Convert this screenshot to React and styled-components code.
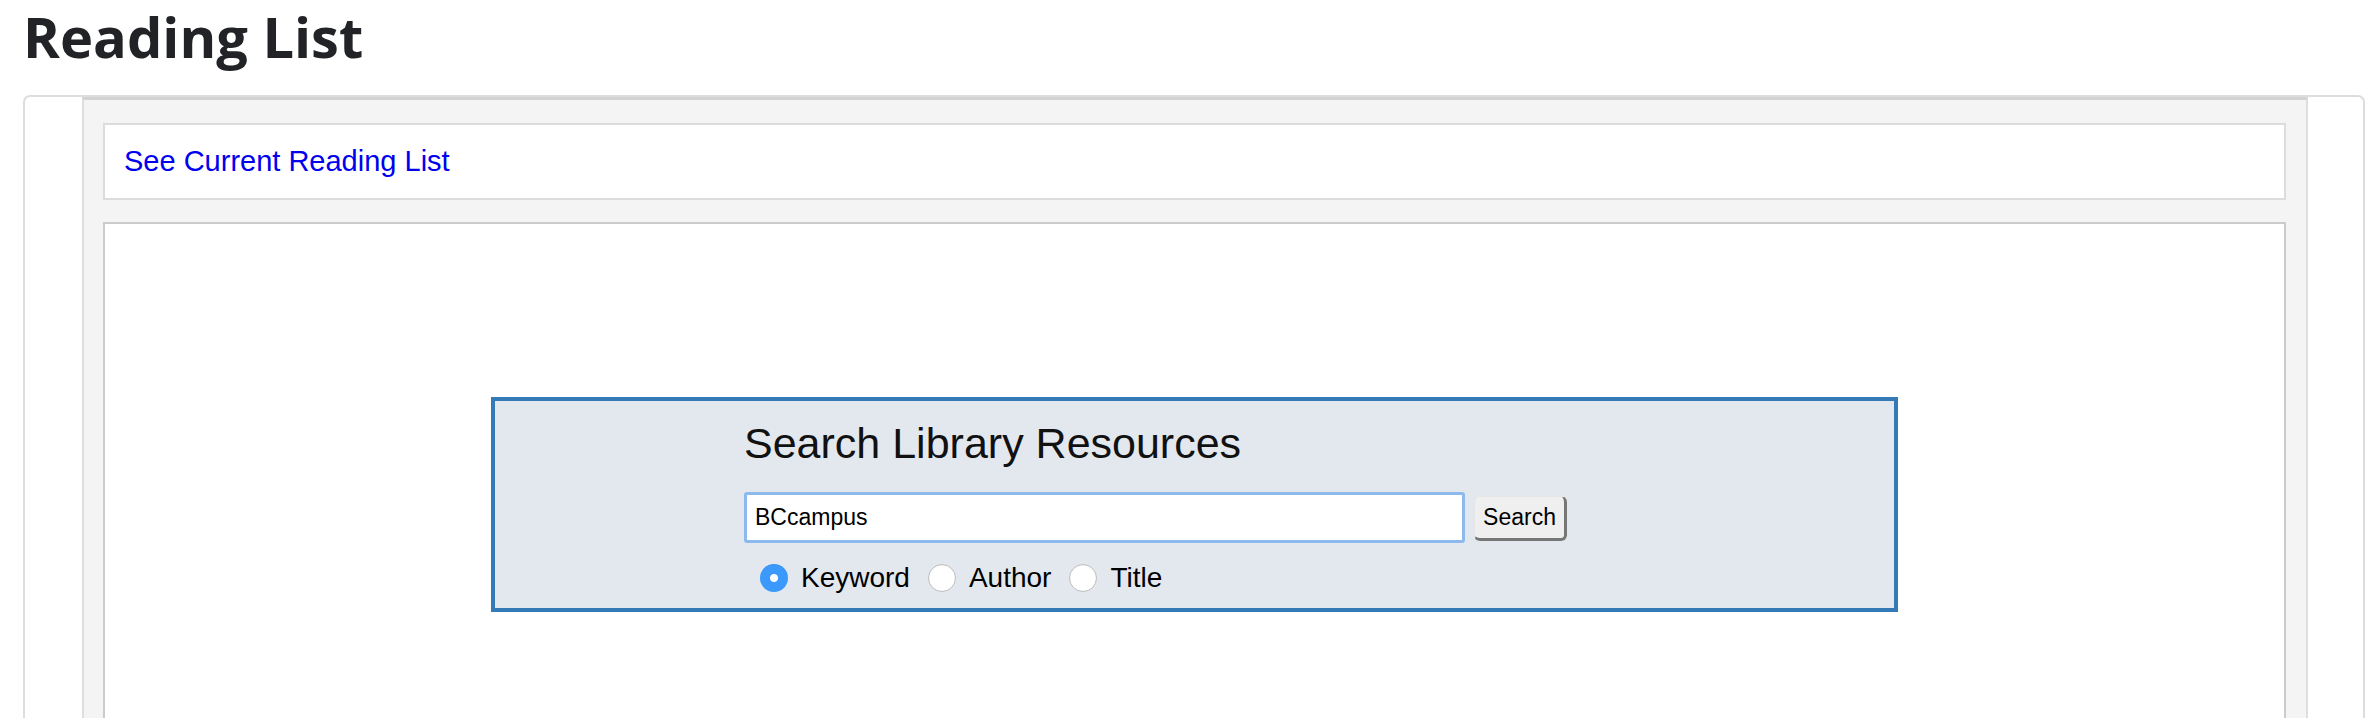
import React from 'react';
import styled, { createGlobalStyle } from 'styled-components';

const GlobalStyle = createGlobalStyle`
    html, body {
        margin: 0;
        padding: 0;
        overflow: hidden;
        background: #fff;
    }
`

const Page = styled.div`
    padding: 0 5px 0 23px;
`

const Heading = styled.h1`
    margin: 0 0 24px;
    padding-top: 1px;
    font-family: "Open Sans", sans-serif;
    font-weight: 700;
    font-size: 56px;
    line-height: 70px;
    color: #222326;
`

const Card = styled.div`
    border: 2px solid #dddddd;
    border-bottom: none;
    border-radius: 7px 7px 0 0;
    padding: 0 55px 0 57px;
    height: 640px;
`

const Panel = styled.div`
    background: #f4f4f4;
    border-top: 3px solid #d2d2d2;
    border-left: 2px solid #dedede;
    border-right: 2px solid #dedede;
    padding: 23px 20px 0 19px;
    height: 100%;
`

const LinkBox = styled.div`
    background: #fff;
    border: 2px solid #dcdcdc;
    padding: 20px 19px 21px;
`

const ListLink = styled.a`
    font-family: "Liberation Sans", Arial, sans-serif;
    font-size: 29px;
    line-height: 32px;
    color: #0000ee;
    text-decoration: none;
`

const Content = styled.div`
    margin-top: 22px;
    background: #fff;
    border: 2px solid #cbcbcb;
    padding-top: 173px;
    height: 600px;
`

const SearchBox = styled.form`
    box-sizing: border-box;
    width: 1407px;
    margin: 0 auto;
    border: 4px solid #337ab7;
    background: #e3e8ef;
    padding: 17px 0 14px;
    font-family: "Liberation Sans", Arial, sans-serif;
    color: #000;
`

const SearchInner = styled.div`
    width: 901px;
    margin: 0 auto;
`

const SearchTitle = styled.h2`
    margin: 0 0 24px;
    font-weight: 400;
    font-size: 43px;
    line-height: 50px;
    color: #111;
`

const SearchRow = styled.div`
    display: flex;
    align-items: center;
    gap: 9px;
`

const QueryInput = styled.input`
    box-sizing: border-box;
    width: 721px;
    height: 51px;
    border: 3px solid #8db9ec;
    border-radius: 3px;
    padding: 0 8px;
    font-family: "Liberation Sans", Arial, sans-serif;
    font-size: 23px;
    color: #000;
    background: #fff;
    outline: none;
`

const SearchButton = styled.button`
    box-sizing: border-box;
    width: 93px;
    height: 45px;
    padding: 0;
    margin-top: 2px;
    background: #efefef;
    border-style: solid;
    border-width: 1px 3px 3px 1px;
    border-color: #e6e6e6 #767676 #767676 #e6e6e6;
    border-radius: 6px;
    font-family: "Liberation Sans", Arial, sans-serif;
    font-size: 23px;
    color: #000;
`

const RadioRow = styled.div`
    display: flex;
    align-items: center;
    gap: 18px;
    margin-top: 19px;
    padding-left: 16px;
    font-size: 28px;
    line-height: 32px;
`

const Option = styled.label`
    display: inline-flex;
    align-items: center;
    gap: 13px;
`

const Radio = styled.input.attrs({ type: 'radio' })`
    appearance: none;
    box-sizing: border-box;
    width: 28px;
    height: 28px;
    margin: 0;
    border-radius: 50%;
    border: 1px solid #bdbdbd;
    background: #ffffff;
    box-shadow: inset 0 1px 1px rgba(0, 0, 0, 0.04);

    &:checked {
        border: none;
        background: radial-gradient(circle, #ffffff 0 3.5px, #3b99fc 4.5px);
    }
`

const options = ['Keyword', 'Author', 'Title'];

const App = () => {
    return (
        <Page>
            <GlobalStyle />
            <Heading>Reading List</Heading>
            <Card>
                <Panel>
                    <LinkBox>
                        <ListLink href="#">See Current Reading List</ListLink>
                    </LinkBox>
                    <Content>
                        <SearchBox onSubmit={e => e.preventDefault()}>
                            <SearchInner>
                                <SearchTitle>Search Library Resources</SearchTitle>
                                <SearchRow>
                                    <QueryInput type="text" defaultValue="BCcampus" />
                                    <SearchButton type="submit">Search</SearchButton>
                                </SearchRow>
                                <RadioRow>
                                    {options.map((o, i) => (
                                        <Option key={o}>
                                            <Radio name="field" value={o.toLowerCase()} defaultChecked={i === 0} />
                                            {o}
                                        </Option>
                                    ))}
                                </RadioRow>
                            </SearchInner>
                        </SearchBox>
                    </Content>
                </Panel>
            </Card>
        </Page>
    );
}

export default App;
